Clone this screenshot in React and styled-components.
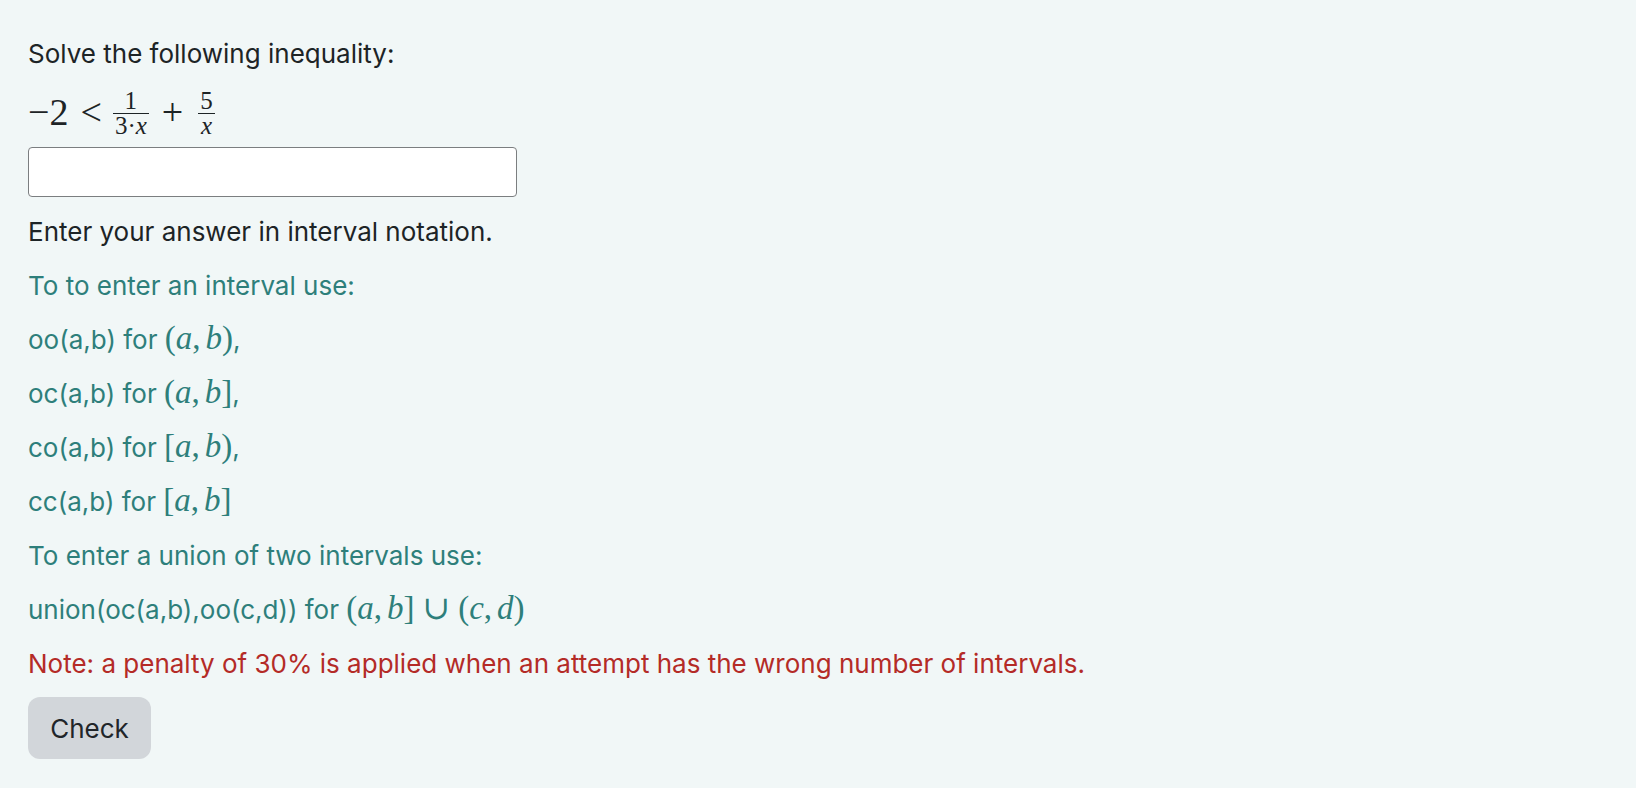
import React from 'react'
import styled, { createGlobalStyle } from 'styled-components'

const GlobalStyle = createGlobalStyle`
  html, body {
    margin: 0;
    padding: 0;
    background: #f1f7f7;
  }
  body {
    font-family: Inter, "Liberation Sans", sans-serif;
    color: #1d2426;
  }
`

const Page = styled.div`
  min-height: 788px;
  box-sizing: border-box;
  padding: 36px 28px;
  background: #f1f7f7;
`

const Para = styled.p`
  margin: 0 0 18px;
  font-size: 26px;
  line-height: 36px;
  color: ${props => props.$tone === 'teal' ? '#2e7f7b' : props.$tone === 'red' ? '#b42b27' : '#1d2426'};
`

const MathLine = styled.div`
  display: flex;
  align-items: center;
  height: 43px;
  margin: 0 0 14px;
  font-family: "Liberation Serif", "DejaVu Serif", serif;
  font-size: 38px;
  line-height: 1;
  color: #1d2426;
`

const Op = styled.span`
  padding: 0 ${props => props.$right || 11}px 0 ${props => props.$left || 11}px;
`

const Frac = styled.span`
  display: inline-flex;
  flex-direction: column;
  align-items: center;
  font-size: 25px;
  line-height: 22px;
  margin: 3px 1px 0;
`

const Num = styled.span`
  padding: 0 2px 1px;
  border-bottom: 1.5px solid currentColor;
  align-self: stretch;
  text-align: center;
`

const Den = styled.span`
  padding: 1px 2px 0;
`

const Var = styled.i`
  font-family: "Liberation Serif", "DejaVu Serif", serif;
  font-style: italic;
`

const M = styled.span`
  font-family: "Liberation Serif", "DejaVu Serif", serif;
  font-size: 33px;
  line-height: 0;
  padding: 0 ${props => props.$pad || 0}px;
`

const Comma = styled.span`
  margin-right: 5px;
`

const AnswerInput = styled.input`
  display: block;
  box-sizing: border-box;
  width: 489px;
  height: 50px;
  margin: 0 0 17px;
  padding: 0 10px;
  border: 1.5px solid #7b7e80;
  border-radius: 4px;
  background: #fff;
  font-size: 24px;
  font-family: Inter, "Liberation Sans", sans-serif;
`

const CheckButton = styled.button`
  display: block;
  width: 123px;
  height: 62px;
  margin-top: -3px;
  border: none;
  border-radius: 12px;
  background: #d2d6da;
  color: #212529;
  font-family: Inter, "Liberation Sans", sans-serif;
  font-size: 26px;
  cursor: pointer;
`

const Interval = ({ open, close, a, b }) => (
  <M>
    {open}<Var>{a}</Var><Comma>,</Comma><Var>{b}</Var>{close}
  </M>
)

export default function App() {
  return (
    <Page>
      <GlobalStyle />
      <Para>Solve the following inequality:</Para>
      <MathLine>
        <span>−2</span>
        <Op $left={12} $right={10}>&lt;</Op>
        <Frac>
          <Num>1</Num>
          <Den>3·<Var>x</Var></Den>
        </Frac>
        <Op $left={12} $right={14}>+</Op>
        <Frac>
          <Num>5</Num>
          <Den><Var>x</Var></Den>
        </Frac>
      </MathLine>
      <AnswerInput type="text" />
      <Para>Enter your answer in interval notation.</Para>
      <Para $tone="teal">To to enter an interval use:</Para>
      <Para $tone="teal">oo(a,b) for <Interval open="(" close=")" a="a" b="b" />,</Para>
      <Para $tone="teal">oc(a,b) for <Interval open="(" close="]" a="a" b="b" />,</Para>
      <Para $tone="teal">co(a,b) for <Interval open="[" close=")" a="a" b="b" />,</Para>
      <Para $tone="teal">cc(a,b) for <Interval open="[" close="]" a="a" b="b" /></Para>
      <Para $tone="teal">To enter a union of two intervals use:</Para>
      <Para $tone="teal">
        union(oc(a,b),oo(c,d)) for <Interval open="(" close="]" a="a" b="b" /><M $pad={8}>∪</M><Interval open="(" close=")" a="c" b="d" />
      </Para>
      <Para $tone="red">Note: a penalty of 30% is applied when an attempt has the wrong number of intervals.</Para>
      <CheckButton>Check</CheckButton>
    </Page>
  )
}
